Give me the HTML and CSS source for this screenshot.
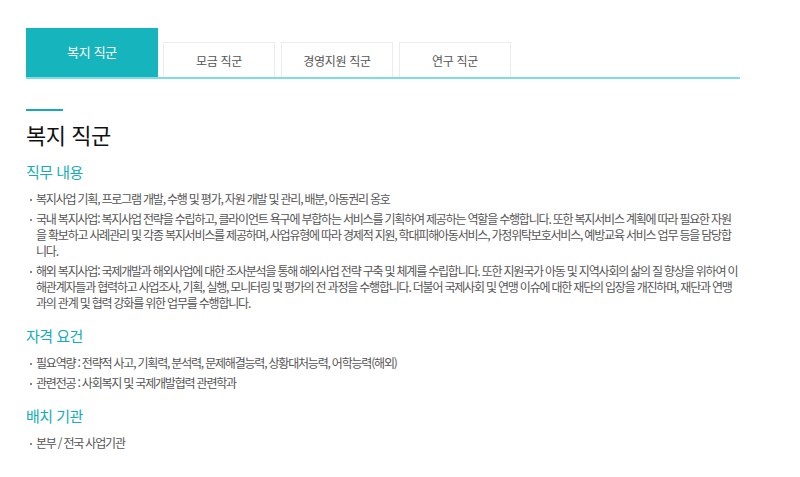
FILE: index.html
```html
<!DOCTYPE html>
<html lang="ko">
<head>
  <meta charset="utf-8">
  <title>복지 직군</title>
  <link rel="stylesheet" href="styles.css">
</head>
<body>
  <div class="wrap">
    <ul class="tabs">
      <li class="tab active">복지 직군</li>
      <li class="tab">모금 직군</li>
      <li class="tab">경영지원 직군</li>
      <li class="tab">연구 직군</li>
    </ul>

    <div class="job">
      <h2 class="job-title">복지 직군</h2>

      <h3 class="sec-title">직무 내용</h3>
      <ul class="list">
        <li>복지사업 기획, 프로그램 개발, 수행 및 평가, 자원 개발 및 관리, 배분, 아동권리 옹호</li>
        <li>국내 복지사업: 복지사업 전략을 수립하고, 클라이언트 욕구에 부합하는 서비스를 기획하여 제공하는 역할을 수행합니다. 또한 복지서비스 계획에 따라 필요한 자원을 확보하고 사례관리 및 각종 복지서비스를 제공하며, 사업유형에 따라 경제적 지원, 학대피해아동서비스, 가정위탁보호서비스, 예방교육 서비스 업무 등을 담당합니다.</li>
        <li>해외 복지사업: 국제개발과 해외사업에 대한 조사분석을 통해 해외사업 전략 구축 및 체계를 수립합니다. 또한 지원국가 아동 및 지역사회의 삶의 질 향상을 위하여 이해관계자들과 협력하고 사업조사, 기획, 실행, 모니터링 및 평가의 전 과정을 수행합니다. 더불어 국제사회 및 연맹 이슈에 대한 재단의 입장을 개진하며, 재단과 연맹과의 관계 및 협력 강화를 위한 업무를 수행합니다.</li>
      </ul>

      <h3 class="sec-title">자격 요건</h3>
      <ul class="list">
        <li>필요역량 : 전략적 사고, 기획력, 분석력, 문제해결능력, 상황대처능력, 어학능력(해외)</li>
        <li>관련전공 : 사회복지 및 국제개발협력 관련학과</li>
      </ul>

      <h3 class="sec-title">배치 기관</h3>
      <ul class="list">
        <li>본부 / 전국 사업기관</li>
      </ul>
    </div>
  </div>
</body>
</html>
```

FILE: styles.css
```css
body {
  margin: 0;
  background: #fff;
  font-family: "Noto Sans CJK KR", "Noto Sans", sans-serif;
  color: #333;
}

.wrap {
  width: 714px;
  margin-left: 26px;
  padding-top: 28px;
}

ul {
  list-style: none;
  margin: 0;
  padding: 0;
}

/* tabs */
.tabs {
  display: flex;
  align-items: flex-end;
  gap: 6px;
  border-bottom: 2px solid #80dbe2;
}

.tab {
  width: 110px;
  height: 34px;
  border: 1px solid #ececec;
  border-bottom: 0;
  display: flex;
  justify-content: center;
  align-items: center;
  font-size: 12px;
  letter-spacing: -0.3px;
  color: #555;
}

.tab.active {
  width: 132px;
  height: 49px;
  border: 0;
  margin-right: -1px;
  background: #16b5bd;
  color: #fff;
  font-size: 13px;
  align-items: flex-start;
  line-height: 48px;
}

/* content */
.job {
  padding-top: 30px;
}

.job::before {
  content: "";
  display: block;
  width: 37px;
  height: 2px;
  background: #1aa7c0;
}

.job-title {
  margin: 8px 0 0;
  font-size: 22px;
  font-weight: 400;
  letter-spacing: -0.5px;
  color: #111;
  line-height: 30px;
}

.sec-title {
  margin: 13px 0 9px;
  font-size: 15px;
  font-weight: 400;
  letter-spacing: -0.5px;
  color: #16adb6;
  line-height: 20px;
}

.list li {
  position: relative;
  padding-left: 10px;
  font-size: 12px;
  line-height: 16px;
  color: #555;
  margin-bottom: 4px;
  letter-spacing: -1.2px;
}

.list li::before {
  content: "";
  position: absolute;
  left: 4px;
  top: 8px;
  width: 2px;
  height: 2px;
  background: #888;
}

.list + .sec-title {
  margin-top: 15px;
}
```
